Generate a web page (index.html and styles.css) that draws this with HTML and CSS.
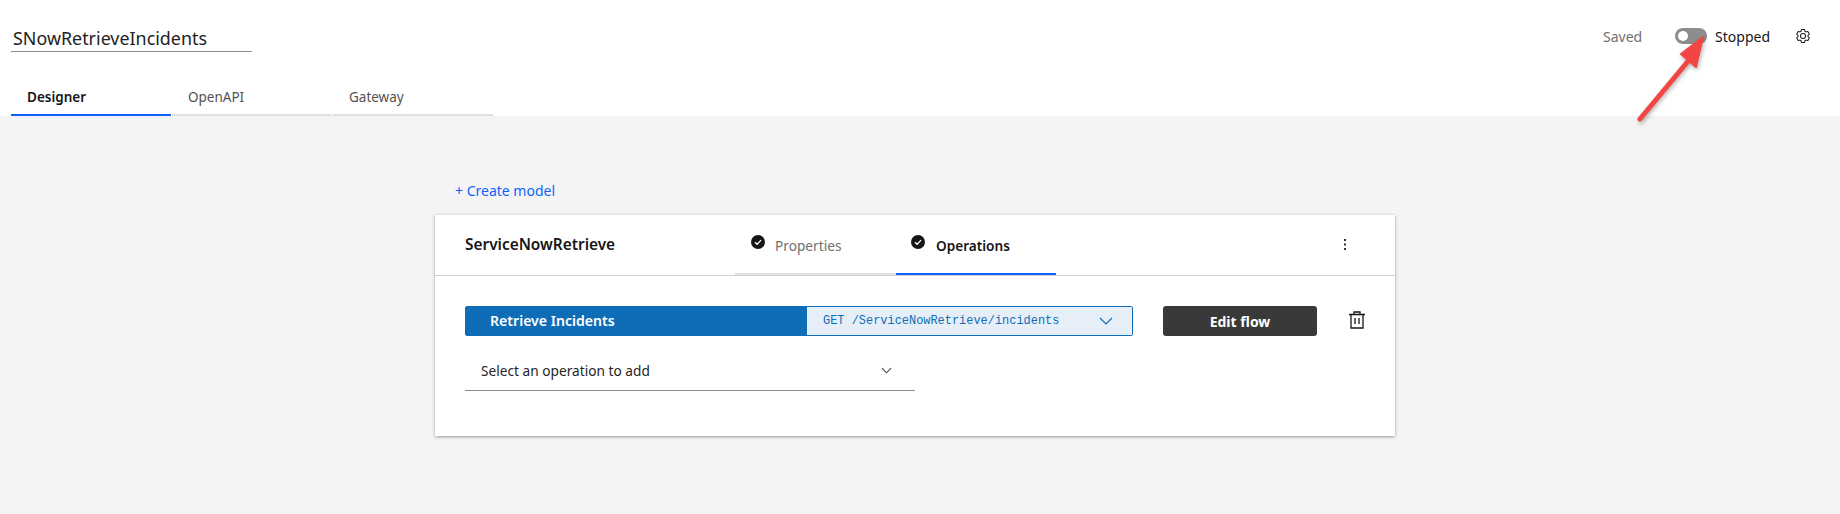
FILE: index.html
```html
<!DOCTYPE html>
<html lang="en">
<head>
<meta charset="utf-8">
<title>SNowRetrieveIncidents</title>
<link rel="stylesheet" href="styles.css">
</head>
<body>
<header class="top">
  <div class="top-row">
    <div class="title">SNowRetrieveIncidents</div>
    <div class="status">
      <span class="saved">Saved</span>
      <span class="toggle"><span class="knob"></span></span>
      <span class="stopped">Stopped</span>
      <svg class="gear" viewBox="0 0 32 32" width="16" height="16" fill="#161616"><path d="M27 16.76V15.24l1.92-1.68A2 2 0 0 0 29.3 11l-2.36-4a2 2 0 0 0-2.37-.9l-2.43.82a11.35 11.35 0 0 0-1.31-.75l-.51-2.52a2 2 0 0 0-2-1.61h-4.68a2 2 0 0 0-2 1.61l-.51 2.52a11.48 11.48 0 0 0-1.32.75l-2.38-.86a2 2 0 0 0-2.37.9l-2.36 4a2 2 0 0 0 .41 2.51L5 15.24v1.52l-1.88 1.68A2 2 0 0 0 2.7 21l2.36 4a2 2 0 0 0 2.37.9l2.43-.82a11.35 11.35 0 0 0 1.31.75l.51 2.52a2 2 0 0 0 2 1.61h4.72a2 2 0 0 0 2-1.61l.51-2.52a11.48 11.48 0 0 0 1.32-.75l2.42.82a2 2 0 0 0 2.37-.9l2.28-4a2 2 0 0 0-.41-2.51zM25.21 24l-3.43-1.16a8.86 8.86 0 0 1-2.71 1.57L18.36 28h-4.72l-.71-3.55a9.36 9.36 0 0 1-2.7-1.57L6.79 24l-2.36-4 2.72-2.4a8.9 8.9 0 0 1 0-3.13L4.43 12l2.36-4 3.43 1.16a8.86 8.86 0 0 1 2.71-1.57L13.64 4h4.72l.71 3.55a9.36 9.36 0 0 1 2.7 1.57L25.21 8l2.36 4-2.72 2.4a8.9 8.9 0 0 1 0 3.13L27.57 20z"/><path d="M16 22a6 6 0 1 1 6-6 5.94 5.94 0 0 1-6 6zm0-10a3.91 3.91 0 0 0-4 4 3.91 3.91 0 0 0 4 4 3.91 3.91 0 0 0 4-4 3.91 3.91 0 0 0-4-4z"/></svg>
    </div>
  </div>
  <nav class="tabs">
    <a class="tab tab-on">Designer</a>
    <a class="tab">OpenAPI</a>
    <a class="tab">Gateway</a>
  </nav>
</header>

<main class="main">
  <a class="create">+ Create model</a>
  <section class="card">
    <div class="card-head">
      <div class="card-name">ServiceNowRetrieve</div>
      <div class="steps">
        <div class="step">
          <svg class="check" viewBox="0 0 14 14" width="14" height="14"><circle cx="7" cy="7" r="7" fill="#161616"/><path d="M3.9 7.2l2.2 2.1 4-4.2" fill="none" stroke="#fff" stroke-width="1.3"/></svg>
          <span>Properties</span>
        </div>
        <div class="step step-on">
          <svg class="check" viewBox="0 0 14 14" width="14" height="14"><circle cx="7" cy="7" r="7" fill="#161616"/><path d="M3.9 7.2l2.2 2.1 4-4.2" fill="none" stroke="#fff" stroke-width="1.3"/></svg>
          <span>Operations</span>
        </div>
      </div>
      <svg class="kebab" viewBox="0 0 4 14" width="4" height="14" fill="#333"><rect x="1" y="1" width="2" height="2"/><rect x="1" y="5.500" width="2" height="2"/><rect x="1" y="10" width="2" height="2"/></svg>
    </div>
    <div class="card-body">
      <div class="op-row">
        <div class="op">
          <div class="op-name">Retrieve Incidents</div>
          <div class="op-path">
            <span>GET /ServiceNowRetrieve/incidents</span>
            <svg viewBox="0 0 14 8" width="14" height="8" fill="none" stroke="#0f6cb6" stroke-width="1.200"><path d="M1 1l6 6 6-6"/></svg>
          </div>
        </div>
        <button class="edit">Edit flow</button>
        <svg class="trash" viewBox="0 0 16 18" width="16" height="18" fill="none" stroke="#161616" stroke-width="1.300"><path d="M0 3.500h16M5 3V1h6v2M2 3.500V17h12V3.500M6 7v6M10 7v6"/></svg>
      </div>
      <div class="select">
        <span>Select an operation to add</span>
        <svg viewBox="0 0 12 7" width="11" height="7" fill="none" stroke="#444" stroke-width="1.200"><path d="M1 1l5 5 5-5"/></svg>
      </div>
    </div>
  </section>
</main>

<svg class="arrow" viewBox="0 0 80 100" width="80" height="100">
  <path d="M6 95L60 30" stroke="#f24645" stroke-width="5" stroke-linecap="round" fill="none"/>
  <path d="M69 13L47 30l15 13z" fill="#f24645" stroke="#f24645" stroke-width="2" stroke-linejoin="round"/>
</svg>
</body>
</html>
```
FILE: styles.css
```css
* { box-sizing: border-box; }
html, body { margin: 0; padding: 0; }
body {
  position: relative;
  width: 1840px;
  height: 514px;
  overflow: hidden;
  background: #f4f4f4;
  font-family: "Noto Sans", "Liberation Sans", sans-serif;
  color: #161616;
  font-size: 14px;
}
.top { background: #fff; height: 116px; padding: 0 0 0 11px; }
.top-row { height: 71px; display: flex; justify-content: space-between; align-items: flex-start; }
.title {
  width: 241px; height: 27px; margin-top: 25px;
  padding-left: 2px;
  font-size: 17.900px; line-height: 26px;
  border-bottom: 1px solid #8d8d8d;
  color: #222;
  white-space: nowrap;
}
.status { display: flex; align-items: center; margin-top: 26px; height: 20px; padding-right: 29px; }
.saved { color: #6f6f6f; font-size: 14px; width: 72px; }
.toggle {
  width: 32px; height: 16px; border-radius: 8px; background: #8d8d8d;
  display: flex; align-items: center; padding-left: 3px; margin-right: 8px;
}
.knob { width: 10px; height: 10px; border-radius: 50%; background: #fff; }
.stopped { font-size: 14px; margin-right: 25px; }
.gear { display: block; }
.tabs { display: flex; gap: 1px; height: 45px; }
.tab {
  width: 160px; height: 45px; padding: 16px 0 0 16px;
  font-size: 13.500px; line-height: 20px; color: #525252;
  border-bottom: 2px solid #e0e0e0;
}
.tab-on { color: #161616; font-weight: 600; border-bottom-color: #0f62fe; }

.main { padding-left: 435px; }
.create {
  display: block; margin: 66px 0 0 20px; height: 33px;
  color: #0f62fe; font-size: 14px; line-height: 18px;
}
.card { width: 960px; height: 221px; background: #fff; box-shadow: 0 1px 3px rgba(0,0,0,.38); }
.card-head {
  height: 61px; display: flex; align-items: flex-start;
  border-bottom: 1px solid #d0d0d0; padding-left: 30px; position: relative;
}
.card-name { width: 270px; margin-top: 20px; font-weight: 600; font-size: 15.400px; line-height: 20px; white-space: nowrap; }
.steps { display: flex; height: 60px; }
.step {
  width: 161px; height: 60px; display: flex; padding: 21px 0 0 16px;
  border-bottom: 2px solid #e0e0e0; color: #6f6f6f; font-size: 13.700px; line-height: 20px;
}
.step-on { width: 160px; color: #161616; font-weight: 600; border-bottom-color: #0f62fe; padding-left: 15px; font-size: 13.600px; }
.check { margin-right: 10px; margin-top: -1px; flex: none; }
.step-on .check { margin-right: 11px; }
.kebab { margin: 23px 0 0 287px; }
.card-body { padding: 30px 0 0 30px; }
.op-row { display: flex; align-items: flex-start; }
.op { width: 668px; height: 30px; display: flex; border: 1px solid #0f6cb6; border-radius: 2px; }
.op-name {
  width: 341px; background: #0f6cb6; color: #fff; font-weight: 600; font-size: 14.100px;
  line-height: 28px; padding-left: 24px;
}
.op-path {
  flex: 1; background: #e6eff8; display: flex; align-items: center; justify-content: space-between;
  padding: 0 19px 0 16px; color: #0f6cb6; font-family: "Liberation Mono", monospace; font-size: 11.950px;
}
.edit {
  width: 154px; height: 30px; margin-left: 30px; border: 0; border-radius: 3px;
  background: #393939; color: #fff; font: 700 14px "Noto Sans", "Liberation Sans", sans-serif;
}
.trash { margin: 5px 0 0 32px; }
.select {
  width: 450px; height: 42px; margin-top: 13px; padding: 2px 23px 0 16px;
  display: flex; align-items: center; justify-content: space-between;
  border-bottom: 1px solid #8d8d8d; font-size: 13.700px; color: #262626;
}
.arrow { position: absolute; left: 1634px; top: 24px; filter: drop-shadow(1px 2px 2px rgba(0,0,0,.3)); }
```
